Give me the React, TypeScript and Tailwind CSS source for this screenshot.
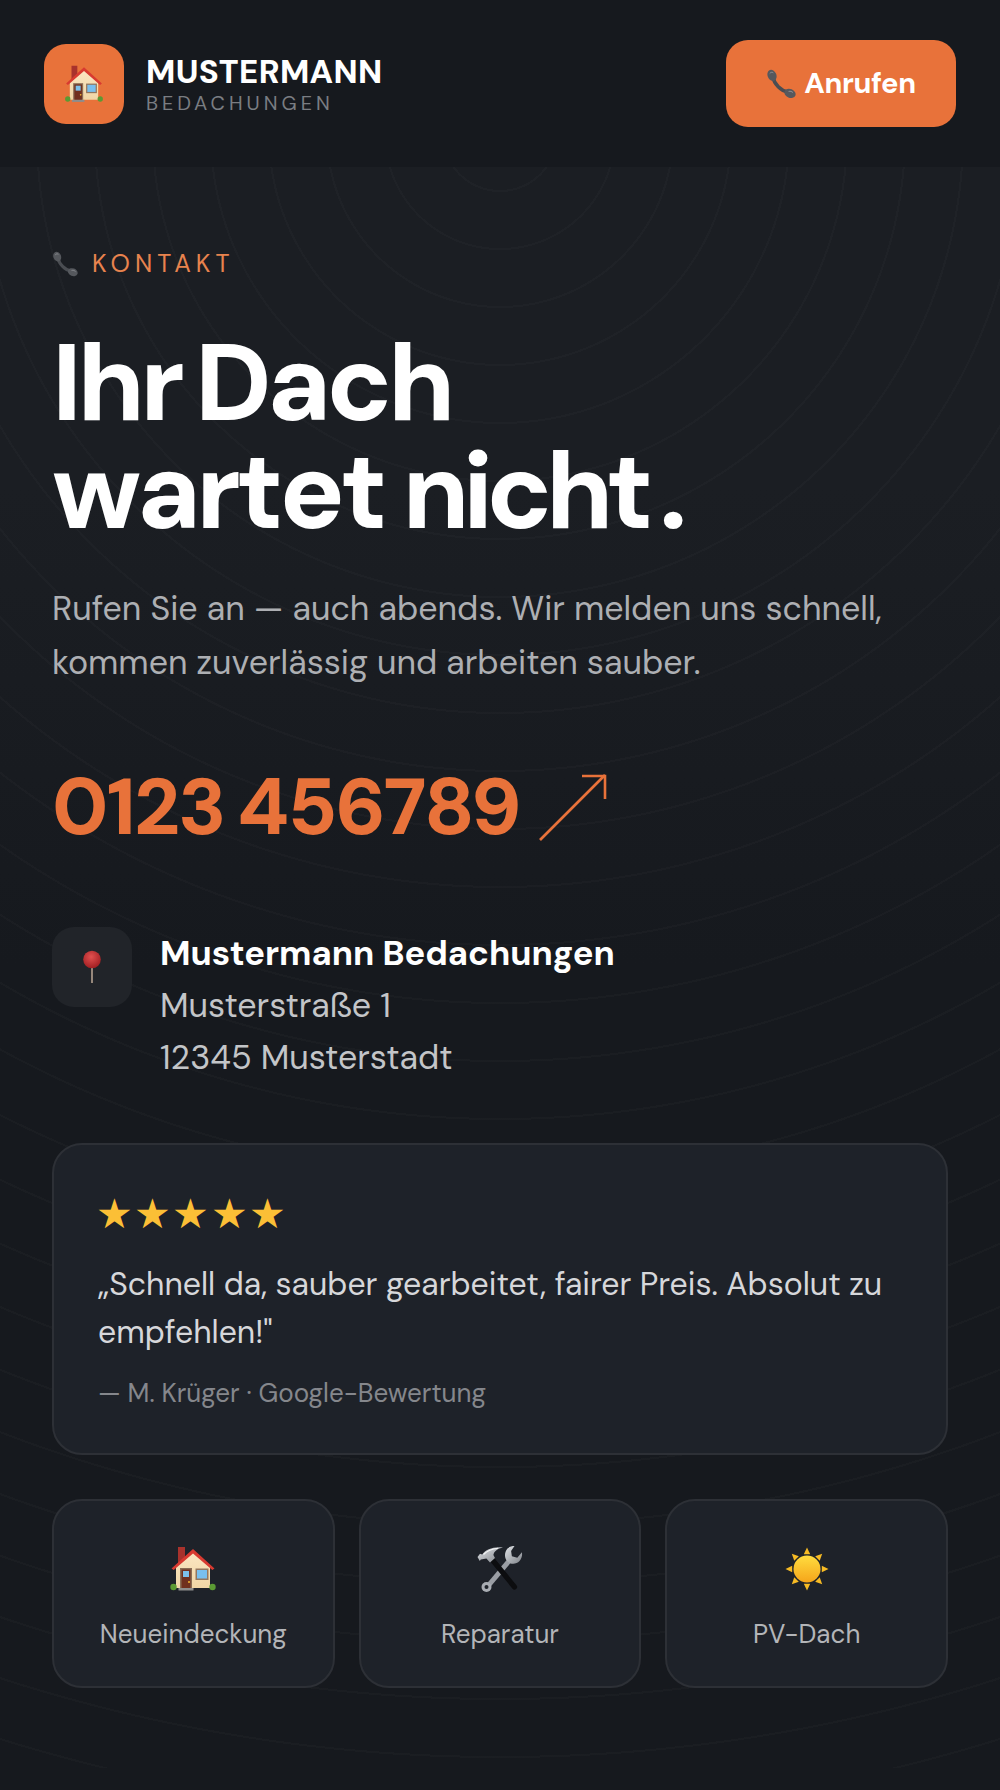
const services = [
  { label: "Neueindeckung", icon: <HouseIcon className="h-[48px] w-[48px]" /> },
  { label: "Reparatur", icon: <ToolsIcon className="h-[48px] w-[48px]" /> },
  { label: "PV-Dach", icon: <SunIcon className="h-[48px] w-[48px]" /> },
];

function HouseIcon({ className }: { className?: string }) {
  return (
    <svg viewBox="0 0 48 48" className={className}>
      <defs>
        <linearGradient id="wall" x1="0" y1="0" x2="0" y2="1">
          <stop offset="0" stopColor="#fbe6c2" />
          <stop offset="1" stopColor="#f0d6a6" />
        </linearGradient>
      </defs>
      <path d="M9 2h7v12l-7 6z" fill="#a8322c" />
      <path d="M7 22 24 7l17 15v21H7z" fill="url(#wall)" />
      <path d="M2.5 23.5 24 4l21.5 19.5-2.2 1.6L24 8.5 4.7 25.1z" fill="#d83a30" />
      <rect x="11" y="23" width="12" height="20" fill="#8a6d55" />
      <rect x="12.5" y="24.5" width="9" height="18.5" fill="#70301f" />
      <rect x="14" y="26" width="6" height="6" fill="#7cc0ea" />
      <circle cx="20" cy="37" r="1" fill="#f2b632" />
      <rect x="26.5" y="23.5" width="13" height="11.5" fill="#94775e" />
      <rect x="28" y="25" width="10" height="8.5" fill="#79bfee" />
      <rect x="9.5" y="43" width="15" height="2.5" fill="#8d8d8d" />
      <circle cx="4.5" cy="42" r="3.2" fill="#5b9a33" />
      <circle cx="43.5" cy="42" r="3.2" fill="#5b9a33" />
    </svg>
  );
}

function PhoneIcon({ className }: { className?: string }) {
  return (
    <svg viewBox="0 0 30 30" className={className}>
      <path d="M7 8C8 15 15 22 22 23" fill="none" stroke="#4a4d52" strokeWidth="3.6" />
      <ellipse cx="6" cy="6.4" rx="4.4" ry="5.8" transform="rotate(-22 6 6.4)" fill="#55585d" />
      <ellipse cx="24" cy="24.4" rx="5.8" ry="4.4" transform="rotate(22 24 24.4)" fill="#55585d" />
      <path d="M4 4.2c.8-1 2-1.2 3-.6" fill="none" stroke="#8e9196" strokeWidth="1" strokeLinecap="round" />
      <path d="M23 22.4c1.4-.4 2.8 0 3.8 1" fill="none" stroke="#8e9196" strokeWidth="1" strokeLinecap="round" />
    </svg>
  );
}

function PinIcon({ className }: { className?: string }) {
  return (
    <svg viewBox="0 0 20 34" className={className}>
      <defs>
        <radialGradient id="pin" cx="0.45" cy="0.35" r="0.7">
          <stop offset="0" stopColor="#e2504f" />
          <stop offset="1" stopColor="#9c1b1f" />
        </radialGradient>
      </defs>
      <rect x="9.2" y="16" width="1.6" height="17" fill="#b4a08f" />
      <circle cx="10" cy="9.5" r="8.8" fill="url(#pin)" />
    </svg>
  );
}

function ToolsIcon({ className }: { className?: string }) {
  return (
    <svg viewBox="0 0 48 48" className={className}>
      <defs>
        <linearGradient id="steel" x1="0" y1="0" x2="1" y2="1">
          <stop offset="0" stopColor="#dfe2e6" />
          <stop offset="1" stopColor="#7f8389" />
        </linearGradient>
      </defs>
      <path d="M33 16 12 41" stroke="#9a9ea4" strokeWidth="5" />
      <circle cx="10.5" cy="42" r="5" fill="#a9adb3" />
      <circle cx="10.5" cy="42" r="2" fill="#1e2229" />
      <path d="M31.5 3.5c-3.2 3.8-3.4 9.4-.2 12.8 3.6 3.6 9 3.2 12.2-.2 2.2-2.6 3-5.6 2.4-8.8l-4.6 5.4-5.4-1.4-.8-5.2 3.4-5c-2.8 0-5 .6-7 2.4z" fill="url(#steel)" />
      <path d="M16.5 15 38.5 42" stroke="#0c0d0f" strokeWidth="5.2" strokeLinecap="round" />
      <path d="M1.5 12 4 8.8l2.2.6C9.6 4.4 17 1.4 27 2.4c-5.2 1-9 3.6-9.6 7.6l1.6 3-5 4.6-3.6-4.2-5.6 1-1 1.6z" fill="url(#steel)" />
      <path d="M7.5 9.5C11 5.8 15.5 3.8 22 3.2" fill="none" stroke="#f6f7f8" strokeWidth="1.1" />
    </svg>
  );
}

function SunIcon({ className }: { className?: string }) {
  return (
    <svg viewBox="0 0 48 48" className={className}>
      <defs>
        <linearGradient id="sun" x1="0" y1="0" x2="0" y2="1">
          <stop offset="0" stopColor="#ffdc3f" />
          <stop offset="1" stopColor="#f5a51a" />
        </linearGradient>
      </defs>
      <g fill="#f7bb24">
        {[0, 45, 90, 135, 180, 225, 270, 315].map((deg) => (
          <path key={deg} d="M24 2.5 27.2 9.2h-6.4z" transform={`rotate(${deg} 24 24)`} />
        ))}
      </g>
      <circle cx="24" cy="24" r="13.5" fill="url(#sun)" />
    </svg>
  );
}

function ArrowIcon({ className }: { className?: string }) {
  return (
    <svg viewBox="0 0 68 68" className={className} fill="none" stroke="#e8723a" strokeWidth="2.6">
      <path d="M1 67 66 2" />
      <path d="M43 3H66V26" />
    </svg>
  );
}

export default function App() {
  return (
    <div className="min-h-[1790px] bg-[#16191e] pb-[22px] font-['DM_Sans',sans-serif] text-white">
      <header className="flex h-[167px] items-center justify-between px-[44px]">
        <div className="flex items-center gap-[22px]">
          <div className="flex h-[80px] w-[80px] items-center justify-center rounded-[22px] bg-[#e8723a]">
            <HouseIcon className="h-[40px] w-[40px]" />
          </div>
          <div className="pt-[1px]">
            <div className="text-[33px] leading-[36px] font-extrabold tracking-[0.01em]">MUSTERMANN</div>
            <div className="mt-[2px] text-[20px] leading-[22px] tracking-[0.2em] text-[#7a7d82]">BEDACHUNGEN</div>
          </div>
        </div>
        <button className="flex h-[87px] w-[230px] items-center justify-center rounded-[22px] bg-[#e8723a] text-[29px] font-bold tracking-[-0.01em]">
          <PhoneIcon className="h-[30px] w-[30px]" />
          <span className="ml-[8px] pt-[1px]">Anrufen</span>
        </button>
      </header>

      <section className="h-[1601px] bg-[repeating-radial-gradient(circle_at_50%_-33px,transparent_0,transparent_56px,rgba(255,255,255,0.02)_56px,rgba(255,255,255,0.02)_58px),linear-gradient(180deg,#1b1e23_0%,#1b1e23_20%,#16191e_50%,#16191e_100%)] px-[52px] pt-[83px]">
        <div className="flex items-center gap-[14px] text-[#e8834e]">
          <PhoneIcon className="h-[26px] w-[26px]" />
          <span className="text-[25px] leading-[28px] tracking-[0.2em]">KONTAKT</span>
        </div>

        <h1 className="mt-[51px] text-[108px] leading-[108px] font-extrabold tracking-[-0.04em] [font-kerning:none] [word-spacing:-0.06em]">
          Ihr Dach
          <br />
          <span className="[word-spacing:-0.015em]">wartet </span>
          <span className="tracking-[-0.06em]">nicht</span>
          <span className="ml-[12px]">.</span>
        </h1>

        <p className="mt-[37px] text-[34px] leading-[54px] text-[#adafb3]">
          Rufen Sie an — auch abends. Wir melden uns schnell,
          <br />
          kommen zuverlässig und arbeiten sauber.
        </p>

        <div className="mt-[73px] flex items-center gap-[19px]">
          <span className="text-[80px] leading-[88px] font-extrabold tracking-[-0.025em] text-[#e8723a] [word-spacing:-0.05em]">0123 456789</span>
          <ArrowIcon className="h-[68px] w-[68px]" />
        </div>

        <div className="mt-[76px] flex items-start gap-[28px]">
          <div className="flex h-[80px] w-[80px] items-center justify-center rounded-[22px] bg-[#212429]">
            <PinIcon className="h-[34px] w-[20px]" />
          </div>
          <div className="pt-[1px]">
            <div className="text-[34.5px] leading-[52px] font-bold">Mustermann Bedachungen</div>
            <div className="text-[34px] leading-[52px] text-[#c3c5c8]">Musterstraße 1</div>
            <div className="text-[34px] leading-[52px] text-[#c3c5c8]">12345 Musterstadt</div>
          </div>
        </div>

        <div className="mt-[59px] h-[312px] rounded-[30px] border-2 border-[#2d3036] bg-[#1e2229] px-[44px] pt-[47px]">
          <div className="-ml-[2px] text-[41px] leading-[44px] tracking-[0.03em] text-[#fbbf36]">★★★★★</div>
          <p className="mt-[24px] text-[32px] leading-[48px] text-[#d6d7da]">
            „Schnell da, sauber gearbeitet, fairer Preis. Absolut zu empfehlen!"
          </p>
          <div className="mt-[20px] text-[26px] leading-[34px] text-[#85878c]">— M. Krüger · Google-Bewertung</div>
        </div>

        <div className="mt-[44px] grid grid-cols-3 gap-[24px]">
          {services.map((s) => (
            <div
              key={s.label}
              className="flex h-[189px] flex-col items-center rounded-[30px] border-2 border-[#2d3036] bg-[#1e2229] pt-[44px]"
            >
              {s.icon}
              <span className="mt-[23px] text-[26px] leading-[36px] text-[#b3b5b8]">{s.label}</span>
            </div>
          ))}
        </div>
      </section>
    </div>
  );
}
